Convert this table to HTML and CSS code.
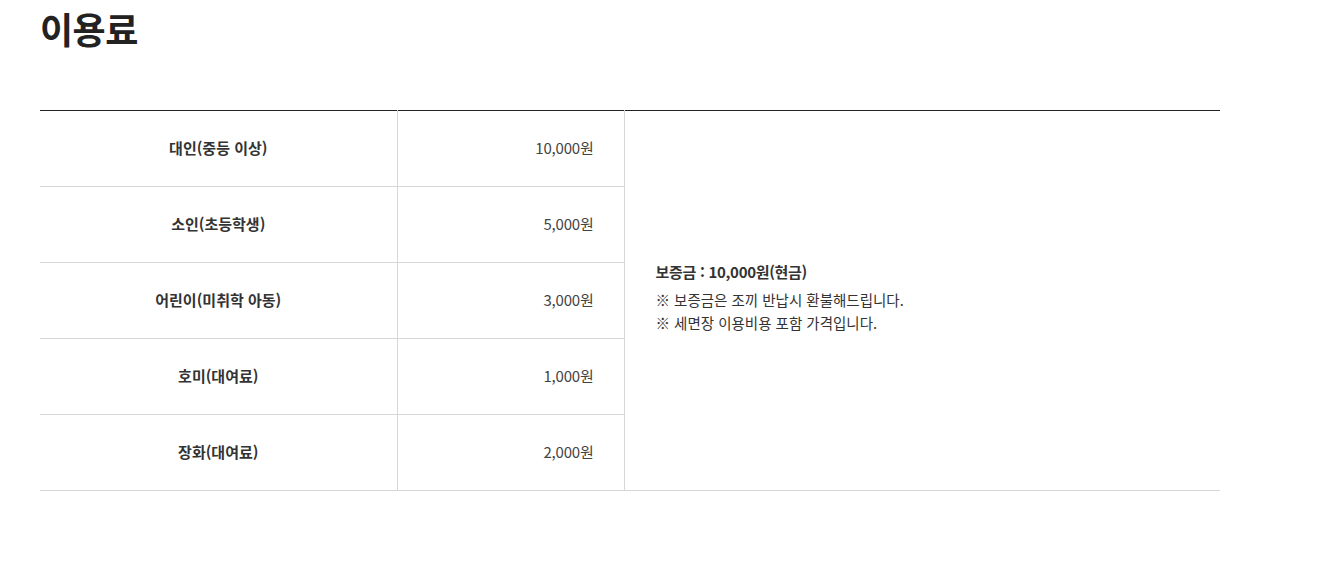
FILE: index.html
```html
<!DOCTYPE html>
<html lang="ko">
<head>
<meta charset="utf-8">
<title>이용료</title>
<link rel="stylesheet" href="styles.css">
</head>
<body>
<div class="page">
  <h2 class="title">이용료</h2>
  <table class="fee">
    <colgroup>
      <col class="c1"><col class="c2"><col class="c3">
    </colgroup>
    <tbody>
      <tr>
        <th>대인(중등 이상)</th>
        <td class="price">10,000원</td>
        <td class="note" rowspan="5">
          <p class="strong">보증금 : 10,000원(현금)</p>
          <p>※ 보증금은 조끼 반납시 환불해드립니다.</p>
          <p>※ 세면장 이용비용 포함 가격입니다.</p>
        </td>
      </tr>
      <tr><th>소인(초등학생)</th><td class="price">5,000원</td></tr>
      <tr><th>어린이(미취학 아동)</th><td class="price">3,000원</td></tr>
      <tr><th>호미(대여료)</th><td class="price">1,000원</td></tr>
      <tr><th>장화(대여료)</th><td class="price">2,000원</td></tr>
    </tbody>
  </table>
</div>
</body>
</html>
```

FILE: styles.css
```css
* { box-sizing: border-box; }
html, body { margin: 0; padding: 0; background: #fff; }
body {
  font-family: "Noto Sans CJK KR", "Noto Sans", sans-serif;
  color: #333;
}
.page { padding: 0 40px; width: 1260px; }
.title {
  margin: 0;
  padding-top: 6px;
  font-size: 36px;
  line-height: 44px;
  font-weight: 700;
  color: #222;
  letter-spacing: -0.5px;
}
.fee {
  margin-top: 60px;
  width: 1180px;
  border-collapse: collapse;
  border-top: 1px solid #222;
  table-layout: fixed;
}
.c1 { width: 357px; }
.c2 { width: 227px; }
.c3 { width: 596px; }
.fee th, .fee td {
  height: 76px;
  border-bottom: 1px solid #d6d6d6;
  border-right: 1px solid #d6d6d6;
  padding: 0 0 3px;
  font-size: 15px;
  vertical-align: middle;
}
.fee th {
  font-weight: 700;
  text-align: center;
  color: #333;
}
.fee td.price {
  text-align: right;
  padding-right: 30px;
  color: #444;
  font-weight: 400;
  letter-spacing: -0.2px;
}
.fee td.note {
  border-right: none;
  padding: 0 0 7px 31px;
  font-size: 14.5px;
  color: #333;
}
.note p { margin: 0; line-height: 23px; }
.note p.strong { font-weight: 700; font-size: 15px; margin-bottom: 5px; letter-spacing: -0.3px; }
```
